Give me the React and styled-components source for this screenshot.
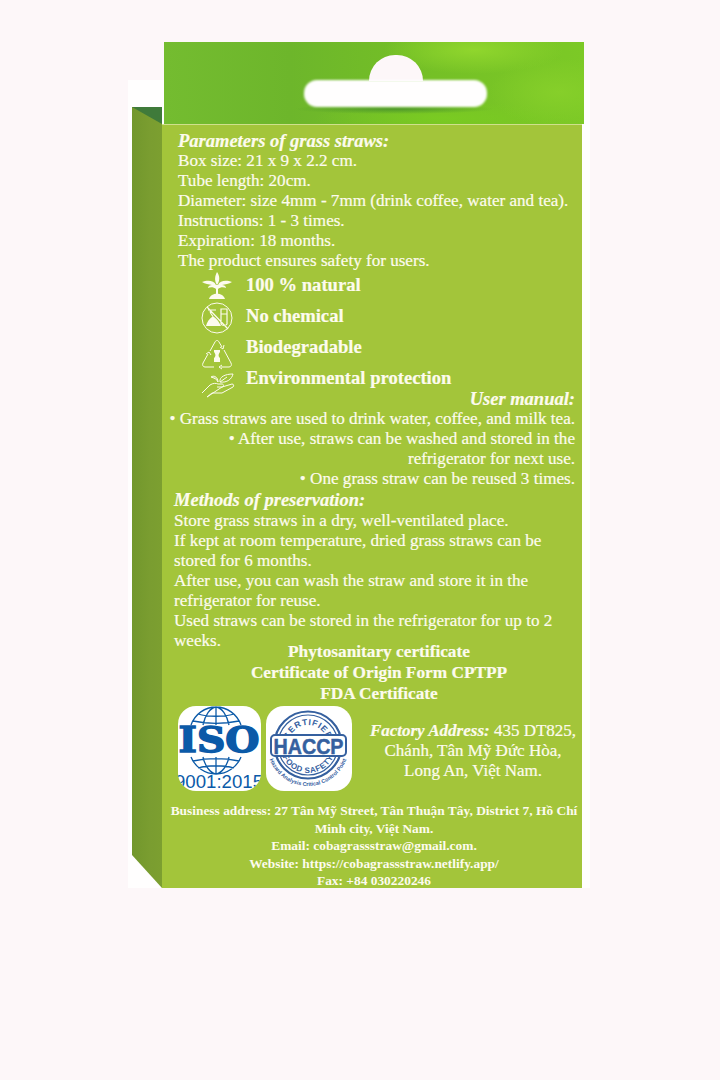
import React from 'react';
import styled, { createGlobalStyle } from 'styled-components';

const GlobalStyle = createGlobalStyle`
    body {
        margin: 0;
        background: #fdf7f9;
        font-family: "Liberation Serif", "DejaVu Serif", serif;
    }
`;

const Page = styled.div`
    position: relative;
    width: 720px;
    height: 1080px;
    padding: 42px 0 0 132px;
    box-sizing: border-box;
    overflow: hidden;
    background: #fdf7f9;
`;

/* white sheet behind the box */
const Backing = styled.div`
    position: absolute;
    top: 80px;
    left: 128px;
    width: 462px;
    height: 808px;
    background: #fffefe;
`;

const Box = styled.div`
    position: relative;
    width: 452px;
`;

const Tab = styled.div`
    position: relative;
    z-index: 2;
    width: 420px;
    height: 82px;
    margin-left: 32px;
    overflow: hidden;
    background:
        radial-gradient(ellipse 90px 24px at 310px 8px, #90d62d 0%, rgba(144, 214, 45, 0) 100%),
        radial-gradient(ellipse 70px 34px at 395px 50px, #86cf2a 0%, rgba(134, 207, 42, 0) 100%),
        radial-gradient(ellipse 100px 5px at 230px 67px, #4f9a2a 0%, rgba(79, 154, 42, 0) 100%),
        radial-gradient(ellipse 130px 16px at 280px 76px, #7acb22 0%, rgba(122, 203, 34, 0) 100%),
        linear-gradient(90deg, #74bc30 0%, #6db62b 30%, #74bf26 60%, #7cc926 100%);
`;

const TabDome = styled.div`
    position: absolute;
    top: 13px;
    left: 205px;
    width: 54px;
    height: 26px;
    border-radius: 27px 27px 0 0;
    background: #fdf7f9;
    filter: blur(0.6px);
`;

const TabSlot = styled.div`
    position: absolute;
    top: 38px;
    left: 140px;
    width: 183px;
    height: 27px;
    border-radius: 13px;
    background: #fffefe;
    filter: blur(1px);
`;

const Body = styled.div`
    display: flex;
    align-items: stretch;
`;

const Side = styled.div`
    position: relative;
    z-index: 1;
    flex: none;
    width: 30px;
    margin-top: -17px;
    background: linear-gradient(90deg, #72972c 0%, #7a9d30 60%, #7c9f30 100%);
    clip-path: polygon(0 0, 100% 0, 100% 100%, 0 calc(100% - 33px));

    &::before {
        content: '';
        position: absolute;
        top: 0;
        left: 0;
        width: 100%;
        height: 17px;
        background: #3f7a3a;
        clip-path: polygon(0 0, 100% 0, 100% 100%);
    }
`;

const Panel = styled.div`
    flex: none;
    width: 420px;
    height: 764px;
    padding-top: 6px;
    box-sizing: border-box;
    overflow: hidden;
    border-top: 1px solid #cfe08c;
    background: #a3c53a;
    color: #fdfbee;
    font-size: 17.1px;
    line-height: 20px;
    -webkit-text-stroke: 0.2px #fdfbee;
`;

const Block = styled.div`
    padding: ${props => props.$padding || '0'};
    text-align: ${props => props.$align || 'left'};
`;

const Heading = styled.div`
    margin-bottom: ${props => props.$gap || 0}px;
    font-style: italic;
    font-weight: 700;
    font-size: 18.5px;
`;

const Features = styled.div`
    display: flex;
    flex-direction: column;
    gap: 5px;
    padding: 1px 0 0 38px;
    margin-bottom: -2px;
`;

const Feature = styled.div`
    display: flex;
    align-items: center;
    gap: 12px;
    height: 26px;
    font-size: 18.6px;
    font-weight: 700;
`;

const FeatureIcon = styled.svg`
    flex: none;
    width: 34px;
    height: 34px;
    overflow: visible;
    fill: none;
    stroke: #fdfbee;
    stroke-width: 1;
`;

const Certificates = styled.div`
    width: 434px;
    margin-top: -10px;
    text-align: center;
    font-size: 17.3px;
    font-weight: 700;
    line-height: 21px;
`;

const Logos = styled.div`
    display: flex;
    align-items: center;
    padding: 2px 0 0 16px;
`;

const LogoCard = styled.div`
    flex: none;
    width: ${props => props.$width}px;
    height: 85px;
    margin-right: 5px;
    border-radius: 18px;
    overflow: hidden;
    background: #ffffff;
`;

const LogoArt = styled.svg`
    display: block;
    width: 100%;
    height: 100%;
`;

const Factory = styled.div`
    flex: 1;
    margin: 5px 0 0 7px;
    text-align: center;
    font-size: 17px;
`;

const FactoryLabel = styled.span`
    font-style: italic;
    font-weight: 700;
`;

const Footer = styled.div`
    width: 424px;
    padding-top: 11px;
    text-align: center;
    font-size: 13.4px;
    font-weight: 700;
    line-height: 17.5px;
    -webkit-text-stroke: 0;
`;

const SproutIcon = () => (
    <FeatureIcon viewBox="0 0 34 34">
        <path fill="#fdfbee" stroke="none" d="M17 17C14 12 15 8 17 4c3 4 3 9 0 13zM16 21c-2-2-6-2-8-1 0-2 2-3 4-3-3-1-7-1-10-3 5-2 12-2 14 3zM18 21c2-2 6-2 8-1 0-2-2-3-4-3 3-1 7-1 10-3-5-2-12-2-14 3zM16 17h2v9h-2zM9 31c2-7 14-7 16 0z" />
    </FeatureIcon>
);

const ChemicalIcon = () => (
    <FeatureIcon viewBox="0 0 34 34">
        <circle cx="17" cy="19" r="15" />
        <path d="M7 8l21 22M8 11h8M10 11c0 5 3 5 3 7M21 10h6v15c-1 2-5 2-6 0zM21 15h6" strokeWidth="1.2" />
        <path fill="#fdfbee" stroke="none" d="M6 27c1-4 3-7 6-9h2c3 2 5 5 7 9z" />
    </FeatureIcon>
);

const RecycleIcon = () => (
    <FeatureIcon viewBox="0 0 34 34">
        <path d="M10 21l5-9c1-2 3-2 4 0l3 5M24 20l7 13c1 2 0 4-2 4h-8M8 24l-5 9c-1 2 0 4 2 4h9" />
        <path d="M20 17l3 2 1-4M22 35l-3 2 3 2M6 24l3-2 2 3" />
        <path fill="#fdfbee" stroke="none" d="M14 20h6v2c-1 1-2 3-1 5l1 1v4h-6v-4l1-1c1-2 0-4-1-5z" />
    </FeatureIcon>
);

const HandIcon = () => (
    <FeatureIcon viewBox="0 0 34 34">
        <path d="M2 32l8-8c3-2 6-2 8-1h4c2 0 2 3 0 3h-5M22 26l10-3c2 0 2 2 1 3l-11 6H12l-5 4z" />
        <path fill="#fdfbee" fillOpacity="0.35" d="M18 21c-1-3-4-4-7-5 3-2 7 0 7 5z" />
        <path d="M20 21c-1-5 5-8 13-8-1 5-6 9-13 8zM20 21l7-5" />
    </FeatureIcon>
);

const features = [
    { label: '100 % natural', Icon: SproutIcon },
    { label: 'No chemical', Icon: ChemicalIcon },
    { label: 'Biodegradable', Icon: RecycleIcon },
    { label: 'Environmental protection', Icon: HandIcon },
];

const IsoLogo = () => (
    <LogoArt viewBox="0 0 83 85">
        <g fill="none" stroke="#0b5aa8" strokeWidth="1.3">
            <path d="M13 19C17 8 27 1 38 1s21 7 25 18M25 19C27 9 32 2 38 1c6 1 11 8 13 18M38 1v18M20 8c10 3 26 3 36 0M15 15c14 3 32 3 46 0" />
            <path d="M13 51c4 10 14 17 25 17s21-7 25-17M25 51c2 9 7 16 13 17 6-1 11-8 13-17M38 51v17M15 55c14-3 32-3 46 0M20 62c10-3 26-3 36 0" />
        </g>
        <text x="41" y="46" textAnchor="middle" fontFamily="'DejaVu Serif', serif" fontSize="36" fontWeight="700" fill="#0b5aa8" stroke="#0b5aa8" strokeWidth="1.5" textLength="81" lengthAdjust="spacingAndGlyphs">ISO</text>
        <text x="41" y="82" textAnchor="middle" fontFamily="'Liberation Sans', sans-serif" fontSize="18" fill="#0b5aa8" textLength="88" lengthAdjust="spacingAndGlyphs">9001:2015</text>
    </LogoArt>
);

const HaccpLogo = () => (
    <LogoArt viewBox="0 0 86 85">
        <defs>
            <path id="arcTop" d="M22 39a20 20 0 0 1 40 0" />
            <path id="arcBottom" d="M14 39a28 28 0 0 0 56 0" />
            <path id="arcOuter" d="M1 39a41 41 0 0 0 82 0" />
        </defs>
        <g fill="none" stroke="#35609f">
            <circle cx="42" cy="39" r="33.5" strokeWidth="2.2" />
            <circle cx="42" cy="39" r="30" strokeWidth="1.2" />
        </g>
        <g fill="#35609f" fontFamily="'Liberation Sans', sans-serif" fontWeight="700" stroke="none">
            <text fontSize="8.5" letterSpacing="0.8"><textPath href="#arcTop" startOffset="50%" textAnchor="middle">CERTIFIED</textPath></text>
            <text fontSize="8" letterSpacing="0.6"><textPath href="#arcBottom" startOffset="50%" textAnchor="middle">FOOD SAFETY</textPath></text>
            <text fontSize="5.5"><textPath href="#arcOuter" startOffset="50%" textAnchor="middle">Hazard Analysis Critical Control Point</textPath></text>
        </g>
        <rect x="5" y="29" width="75" height="21" rx="4" fill="#fff" stroke="#35609f" strokeWidth="2" />
        <text x="42.5" y="47.5" textAnchor="middle" fontFamily="'Liberation Sans', sans-serif" fontSize="22" fontWeight="700" fill="#35609f" stroke="#35609f" strokeWidth="0.5" textLength="70" lengthAdjust="spacingAndGlyphs">HACCP</text>
    </LogoArt>
);

const App = () => (
    <>
        <GlobalStyle />
        <Page>
            <Backing />
            <Box>
                <Tab>
                    <TabDome />
                    <TabSlot />
                </Tab>
                <Body>
                    <Side />
                    <Panel>
                        <Block $padding="0 0 0 16px">
                            <Heading>Parameters of grass straws:</Heading>
                            <div>Box size: 21 x 9 x 2.2 cm.</div>
                            <div>Tube length: 20cm.</div>
                            <div>Diameter: size 4mm - 7mm (drink coffee, water and tea).</div>
                            <div>Instructions: 1 - 3 times.</div>
                            <div>Expiration: 18 months.</div>
                            <div>The product ensures safety for users.</div>
                        </Block>
                        <Features>
                            {features.map(({ label, Icon }) => (
                                <Feature key={label}>
                                    <Icon />
                                    {label}
                                </Feature>
                            ))}
                        </Features>
                        <Block $padding="0 7px 0 0" $align="right">
                            <Heading>User manual:</Heading>
                            <div>• Grass straws are used to drink water, coffee, and milk tea.</div>
                            <div>• After use, straws can be washed and stored in the</div>
                            <div>refrigerator for next use.</div>
                            <div>• One grass straw can be reused 3 times.</div>
                        </Block>
                        <Block $padding="1px 20px 0 12px">
                            <Heading $gap={1}>Methods of preservation:</Heading>
                            <div>Store grass straws in a dry, well-ventilated place.</div>
                            <div>If kept at room temperature, dried grass straws can be stored for 6 months.</div>
                            <div>After use, you can wash the straw and store it in the refrigerator for reuse.</div>
                            <div>Used straws can be stored in the refrigerator for up to 2 weeks.</div>
                        </Block>
                        <Certificates>
                            <div>Phytosanitary certificate</div>
                            <div>Certificate of Origin Form CPTPP</div>
                            <div>FDA Certificate</div>
                        </Certificates>
                        <Logos>
                            <LogoCard $width={83}><IsoLogo /></LogoCard>
                            <LogoCard $width={86}><HaccpLogo /></LogoCard>
                            <Factory>
                                <FactoryLabel>Factory Address:</FactoryLabel> 435 DT825,<br />
                                Chánh, Tân Mỹ Đức Hòa,<br />
                                Long An, Việt Nam.
                            </Factory>
                        </Logos>
                        <Footer>
                            <div>Business address: 27 Tân Mỹ Street, Tân Thuận Tây, District 7, Hồ Chí Minh city, Việt Nam.</div>
                            <div>Email: cobagrassstraw@gmail.com.</div>
                            <div>Website: https://cobagrassstraw.netlify.app/</div>
                            <div>Fax: +84 030220246</div>
                        </Footer>
                    </Panel>
                </Body>
            </Box>
        </Page>
    </>
);

export default App;
